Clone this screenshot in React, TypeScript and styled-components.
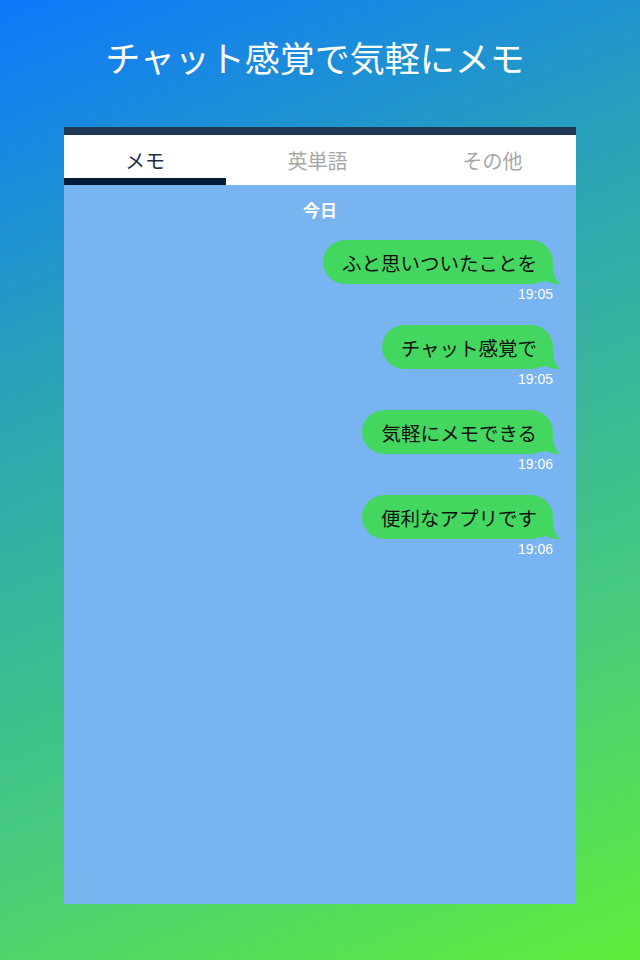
import React, { useState } from 'react';
import styled, { createGlobalStyle } from 'styled-components';

const GlobalStyle = createGlobalStyle`
  html, body {
    margin: 0;
    padding: 0;
  }
  body {
    font-family: "Noto Sans CJK JP", "Noto Sans", sans-serif;
  }
  * {
    box-sizing: border-box;
  }
`;

enum Tab {
  MEMO = 'memo',
  WORDS = 'words',
  OTHER = 'other',
}

const tabs = [
  { id: Tab.MEMO, label: 'メモ' },
  { id: Tab.WORDS, label: '英単語' },
  { id: Tab.OTHER, label: 'その他' },
];

const messages = [
  { text: 'ふと思いついたことを', time: '19:05' },
  { text: 'チャット感覚で', time: '19:05' },
  { text: '気軽にメモできる', time: '19:06' },
  { text: '便利なアプリです', time: '19:06' },
];

function App() {
  const [activeTab, setActiveTab] = useState(Tab.MEMO);

  return (
    <Page>
      <GlobalStyle />
      <Headline>チャット感覚で気軽にメモ</Headline>
      <Phone>
        <StatusStrip />
        <TabList>
          {tabs.map((tab) => (
            <TabButton
              key={tab.id}
              $isActive={activeTab === tab.id}
              onClick={() => setActiveTab(tab.id)}
            >
              {tab.label}
            </TabButton>
          ))}
        </TabList>
        <Chat>
          <DayLabel>今日</DayLabel>
          {messages.map((msg, i) => (
            <Message key={i}>
              <Bubble>
                {msg.text}
                <Tail width="20" height="20" viewBox="0 0 20 20">
                  <path d="M0 0 H12 C12 10 15 16 20 19 C14 19.5 9 18 5 16 C3 17 1 17 0 17 Z" fill="#44d760" />
                </Tail>
              </Bubble>
              <Time>{msg.time}</Time>
            </Message>
          ))}
        </Chat>
      </Phone>
    </Page>
  );
}

export default App;

const Page = styled.div`
  width: 640px;
  height: 960px;
  display: flex;
  flex-direction: column;
  align-items: center;
  background: linear-gradient(158deg, #0e78fb 0%, #2ca6b2 35%, #46cb7e 70%, #5eee3b 100%);
  overflow: hidden;
`

const Headline = styled.h1`
  margin: 0;
  height: 127px;
  display: flex;
  align-items: center;
  justify-content: center;
  padding: 0 10px 15px 0;
  font-size: 35px;
  font-weight: 400;
  color: #ffffff;
`

const Phone = styled.div`
  width: 512px;
  height: 777px;
  display: flex;
  flex-direction: column;
`

const StatusStrip = styled.div`
  height: 8px;
  background-color: #1f3954;
`

const TabList = styled.div`
  height: 50px;
  display: grid;
  grid-template-columns: 162px 1fr 1fr;
  background-color: #ffffff;
`

const TabButton = styled.button<{ $isActive?: boolean }>`
  padding: 7px 0 0;
  border: none;
  border-bottom: 7px solid ${({ $isActive }) => ($isActive ? '#011b38' : 'transparent')};
  background: none;
  font-family: inherit;
  font-size: 20px;
  color: ${({ $isActive }) => ($isActive ? '#1c2f47' : '#a8a8a8')};
  cursor: pointer;
  &:not(:first-child) {
    padding-left: 8px;
  }
`

const Chat = styled.div`
  flex-grow: 1;
  display: flex;
  flex-direction: column;
  align-items: flex-end;
  padding: 14px 23px 0 0;
  background-color: #78b4f1;
`

const DayLabel = styled.div`
  align-self: center;
  padding-left: 23px;
  height: 22px;
  line-height: 22px;
  font-size: 17px;
  font-weight: 700;
  color: #ffffff;
  margin-bottom: 19px;
`

const Message = styled.div`
  display: flex;
  flex-direction: column;
  align-items: flex-end;
  margin-bottom: 23px;
`

const Bubble = styled.div`
  position: relative;
  height: 44px;
  padding: 0 16px 0 19px;
  display: flex;
  align-items: center;
  border-radius: 22px;
  background-color: #44d760;
  font-size: 19.5px;
  color: #111111;
  white-space: nowrap;
`

const Tail = styled.svg`
  position: absolute;
  right: -8px;
  bottom: -1px;
`

const Time = styled.div`
  margin-top: 3px;
  height: 15px;
  line-height: 15px;
  font-family: "Liberation Sans", Arial, sans-serif;
  font-size: 14px;
  color: #ffffff;
`
